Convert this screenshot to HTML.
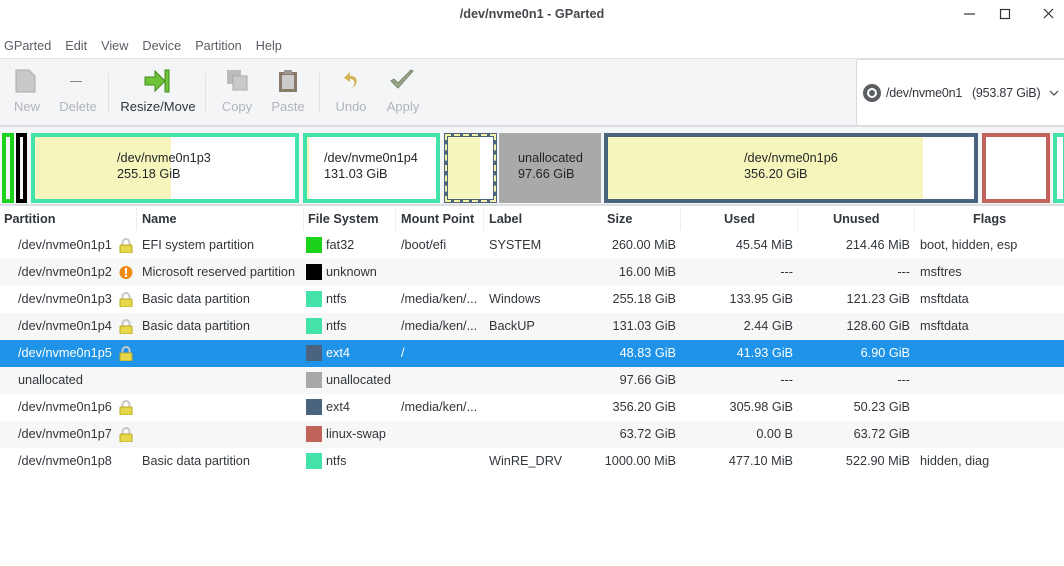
<!DOCTYPE html>
<html><head><meta charset="utf-8"><style>
*{margin:0;padding:0;box-sizing:border-box}
body{width:1064px;height:566px;overflow:hidden;background:#fff;font-family:"Liberation Sans","DejaVu Sans",sans-serif;font-size:12.7px;color:#31363b;position:relative}
.a{position:absolute}
.title{top:0;left:0;width:1064px;height:32px;text-align:center;line-height:28px;font-weight:bold;color:#45494d}
.menu{top:32px;left:0;height:26px;line-height:28px;color:#5a5f66}
.menu span{margin-left:4px;margin-right:10px}
.tb{top:58px;left:0;width:1064px;height:68px;background:#f4f5f7;border-top:1px solid #e0e2e5}
.tl{font-size:13px;color:#b1b4b8;text-align:center;top:40px}
.sep{width:1px;height:40px;background:#dfe1e3;top:14px}
.map{top:125px;left:0;width:1064px;height:81px;background:#f4f5f7;border-top:2px solid #dcdee1;border-bottom:2px solid #dcdee1}
.b{top:6px;height:70px;border:4px solid}
.bt{font-size:12.7px;color:#232629;line-height:16px}
.hdr{top:206px;left:0;width:1064px;height:26px;font-weight:bold;color:#31363b}
.hdr span{position:absolute;top:6px}
.row{left:0;width:1064px;height:27px}
.row span{position:absolute;top:6px;white-space:nowrap}
.alt{background:#f7f7f7}
.sel{background:#1e93e8;color:#fff}
.sw{width:16px;height:16px;top:5px!important;left:306px}
.r{text-align:right}
.lock{left:119px;top:6px!important;width:14px;height:15px}
</style></head><body>
<div class="a title">/dev/nvme0n1 - GParted</div>
<svg class="a" style="left:955px;top:8px" width="100" height="14"><line x1="9" y1="6" x2="20" y2="6" stroke="#333" stroke-width="1.2"/><rect x="45.5" y="1.5" width="9" height="9" fill="none" stroke="#333" stroke-width="1.2"/><path d="M89 1 L98 10 M98 1 L89 10" stroke="#333" stroke-width="1.2"/></svg>
<div class="a menu"><span>GParted</span><span>Edit</span><span>View</span><span>Device</span><span>Partition</span><span>Help</span></div>
<div class="a tb">
 <svg class="a" style="left:15px;top:10px" width="22" height="24"><path d="M1 1h13l6 6v16H1z" fill="#c9c9c9" stroke="#aaa"/></svg>
 <div class="a" style="left:70px;top:22px;width:12px;height:1px;background:#888"></div>
 <svg class="a" style="left:144px;top:10px" width="26" height="24"><path d="M1 8h10V2l10 10-10 10v-6H1z" fill="#6fc33a" stroke="#3f8a1a"/><rect x="21" y="1" width="4" height="22" fill="#6fc33a" stroke="#3f8a1a"/></svg>
 <svg class="a" style="left:226px;top:10px" width="24" height="24"><rect x="1" y="1" width="14" height="14" fill="#bbb"/><rect x="7" y="7" width="14" height="14" fill="#c9c9c9" stroke="#aaa"/></svg>
 <svg class="a" style="left:278px;top:10px" width="20" height="24"><rect x="1" y="3" width="18" height="20" fill="#8a7a6a"/><rect x="4" y="6" width="12" height="14" fill="#ccc"/><rect x="6" y="1" width="8" height="4" fill="#999"/></svg>
 <svg class="a" style="left:342px;top:11px" width="18" height="24"><path d="M8 2 L2 8 L8 12 V9 C13 9 14 14 10 18 C17 15 16 5 8 6z" fill="#d4b256"/></svg>
 <svg class="a" style="left:389px;top:10px" width="26" height="24"><path d="M2 12 L9 19 L24 2 L22 1 L9 14 L5 10z" fill="#9aa78a" stroke="#7a8a6a"/></svg>
 <div class="a tl" style="left:6px;width:42px">New</div>
 <div class="a tl" style="left:55px;width:46px">Delete</div>
 <div class="a sep" style="left:108px"></div>
 <div class="a tl" style="left:118px;width:80px;color:#31363b">Resize/Move</div>
 <div class="a sep" style="left:205px"></div>
 <div class="a tl" style="left:218px;width:38px">Copy</div>
 <div class="a tl" style="left:268px;width:40px">Paste</div>
 <div class="a sep" style="left:319px"></div>
 <div class="a tl" style="left:331px;width:40px">Undo</div>
 <div class="a tl" style="left:382px;width:42px">Apply</div>
 <div class="a" style="left:856px;top:0;width:210px;height:67px;background:#fff;border:1px solid #d8dadd;border-radius:3px">
  <svg class="a" style="left:5px;top:23px" width="20" height="20"><circle cx="10" cy="10" r="9" fill="#5b5f63"/><circle cx="10" cy="10" r="5" fill="#fff"/><circle cx="10" cy="10" r="3" fill="#5b5f63"/></svg>
  <div class="a" style="left:29px;top:26px;color:#31363b;white-space:nowrap;font-size:12.5px;letter-spacing:-0.2px">/dev/nvme0n1 &nbsp; (953.87 GiB)</div>
  <svg class="a" style="left:192px;top:29px" width="10" height="8"><path d="M1 2l4 4 4-4" fill="none" stroke="#444" stroke-width="1.2"/></svg>
 </div>
</div>
<div class="a map">
 <div class="a b" style="left:2px;width:12px;border-color:#1ad31a"></div>
 <div class="a b" style="left:16px;width:11px;border-color:#000"></div>
 <div class="a b" style="left:31px;width:268px;border-color:#42e2a8;background:linear-gradient(90deg,#f6f6bc 0 136px,#fff 136px)"><div class="a bt" style="left:82px;top:13px">/dev/nvme0n1p3<br>255.18 GiB</div></div>
 <div class="a b" style="left:303px;width:137px;border-color:#42e2a8;background:linear-gradient(90deg,#f6f6bc 0 2px,#fff 2px)"><div class="a bt" style="left:17px;top:13px">/dev/nvme0n1p4<br>131.03 GiB</div></div>
 <div class="a b" style="left:444px;width:53px;border:4px solid #4a6480;background:linear-gradient(90deg,#f6f6bc 0 32px,#fff 32px)"></div>
 <div class="a" style="left:445px;top:7px;width:51px;height:68px;border:2px dashed #f4f2a8"></div>
 <div class="a" style="left:499px;top:6px;width:102px;height:70px;background:#a9a9a9"><div class="a bt" style="left:19px;top:17px">unallocated<br>97.66 GiB</div></div>
 <div class="a b" style="left:604px;width:374px;border-color:#4a6480;background:linear-gradient(90deg,#f6f6bc 0 315px,#fff 315px)"><div class="a bt" style="left:136px;top:13px">/dev/nvme0n1p6<br>356.20 GiB</div></div>
 <div class="a b" style="left:982px;width:68px;border-color:#c0645a;background:#fff"></div>
 <div class="a b" style="left:1053px;width:14px;border-color:#42e2a8;background:#fff"></div>
</div>
<div class="a hdr">
 <span style="left:4px">Partition</span><span style="left:142px">Name</span><span style="left:308px">File System</span><span style="left:401px">Mount Point</span><span style="left:489px">Label</span>
 <span style="left:607px">Size</span><span style="left:724px">Used</span><span style="left:833px">Unused</span><span style="left:973px">Flags</span>
 <div class="a" style="left:136px;top:2px;width:1px;height:22px;background:#eee"></div>
 <div class="a" style="left:303px;top:2px;width:1px;height:22px;background:#eee"></div>
 <div class="a" style="left:395px;top:2px;width:1px;height:22px;background:#eee"></div>
 <div class="a" style="left:483px;top:2px;width:1px;height:22px;background:#eee"></div>
 <div class="a" style="left:680px;top:2px;width:1px;height:22px;background:#eee"></div>
 <div class="a" style="left:797px;top:2px;width:1px;height:22px;background:#eee"></div>
 <div class="a" style="left:914px;top:2px;width:1px;height:22px;background:#eee"></div>
</div>
<svg width="0" height="0" style="position:absolute"><defs><g id="lk"><path d="M3.5 7V4.5a3.5 3.5 0 0 1 7 0V7" fill="none" stroke="#c8c8c8" stroke-width="2"/><rect x="1" y="7" width="12" height="8" rx="1" fill="#e6d84a" stroke="#b8a820"/></g></defs></svg>

<div class="a row" style="top:232px"><span style="left:18px">/dev/nvme0n1p1</span><svg class="a lock"><use href="#lk"/></svg><span style="left:142px">EFI system partition</span><span class="sw" style="background:#1ad31a"></span><span style="left:326px">fat32</span><span style="left:401px">/boot/efi</span><span style="left:489px">SYSTEM</span><span class="r" style="right:388px">260.00 MiB</span><span class="r" style="right:271px">45.54 MiB</span><span class="r" style="right:154px">214.46 MiB</span><span style="left:920px">boot, hidden, esp</span></div>
<div class="a row alt" style="top:259px"><span style="left:18px">/dev/nvme0n1p2</span><svg class="a lock"><circle cx="7" cy="7.5" r="6.5" fill="#f08c14"/><rect x="6" y="3" width="2" height="6" fill="#fff"/><rect x="6" y="10" width="2" height="2" fill="#fff"/></svg><span style="left:142px">Microsoft reserved partition</span><span class="sw" style="background:#000"></span><span style="left:326px">unknown</span><span class="r" style="right:388px">16.00 MiB</span><span class="r" style="right:271px">---</span><span class="r" style="right:154px">---</span><span style="left:920px">msftres</span></div>
<div class="a row" style="top:286px"><span style="left:18px">/dev/nvme0n1p3</span><svg class="a lock"><use href="#lk"/></svg><span style="left:142px">Basic data partition</span><span class="sw" style="background:#42e2a8"></span><span style="left:326px">ntfs</span><span style="left:401px">/media/ken/...</span><span style="left:489px">Windows</span><span class="r" style="right:388px">255.18 GiB</span><span class="r" style="right:271px">133.95 GiB</span><span class="r" style="right:154px">121.23 GiB</span><span style="left:920px">msftdata</span></div>
<div class="a row alt" style="top:313px"><span style="left:18px">/dev/nvme0n1p4</span><svg class="a lock"><use href="#lk"/></svg><span style="left:142px">Basic data partition</span><span class="sw" style="background:#42e2a8"></span><span style="left:326px">ntfs</span><span style="left:401px">/media/ken/...</span><span style="left:489px">BackUP</span><span class="r" style="right:388px">131.03 GiB</span><span class="r" style="right:271px">2.44 GiB</span><span class="r" style="right:154px">128.60 GiB</span><span style="left:920px">msftdata</span></div>
<div class="a row sel" style="top:340px"><span style="left:18px">/dev/nvme0n1p5</span><svg class="a lock"><use href="#lk"/></svg><span class="sw" style="background:#4a6480"></span><span style="left:326px">ext4</span><span style="left:401px">/</span><span class="r" style="right:388px">48.83 GiB</span><span class="r" style="right:271px">41.93 GiB</span><span class="r" style="right:154px">6.90 GiB</span></div>
<div class="a row alt" style="top:367px"><span style="left:18px">unallocated</span><span class="sw" style="background:#a9a9a9"></span><span style="left:326px">unallocated</span><span class="r" style="right:388px">97.66 GiB</span><span class="r" style="right:271px">---</span><span class="r" style="right:154px">---</span></div>
<div class="a row" style="top:394px"><span style="left:18px">/dev/nvme0n1p6</span><svg class="a lock"><use href="#lk"/></svg><span class="sw" style="background:#4a6480"></span><span style="left:326px">ext4</span><span style="left:401px">/media/ken/...</span><span class="r" style="right:388px">356.20 GiB</span><span class="r" style="right:271px">305.98 GiB</span><span class="r" style="right:154px">50.23 GiB</span></div>
<div class="a row alt" style="top:421px"><span style="left:18px">/dev/nvme0n1p7</span><svg class="a lock"><use href="#lk"/></svg><span class="sw" style="background:#c0645a"></span><span style="left:326px">linux-swap</span><span class="r" style="right:388px">63.72 GiB</span><span class="r" style="right:271px">0.00 B</span><span class="r" style="right:154px">63.72 GiB</span></div>
<div class="a row" style="top:448px"><span style="left:18px">/dev/nvme0n1p8</span><span style="left:142px">Basic data partition</span><span class="sw" style="background:#42e2a8"></span><span style="left:326px">ntfs</span><span style="left:489px">WinRE_DRV</span><span class="r" style="right:388px">1000.00 MiB</span><span class="r" style="right:271px">477.10 MiB</span><span class="r" style="right:154px">522.90 MiB</span><span style="left:920px">hidden, diag</span></div>
</body></html>
